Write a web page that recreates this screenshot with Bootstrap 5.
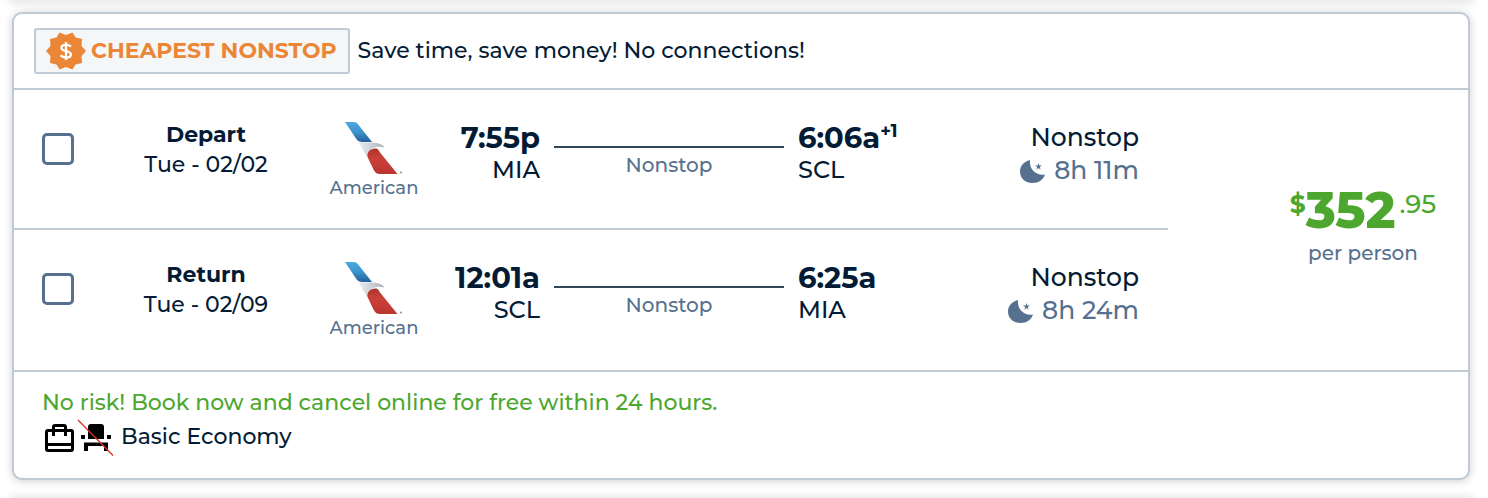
<!DOCTYPE html>
<html lang="en">
<head>
<meta charset="utf-8">
<meta name="viewport" content="width=device-width, initial-scale=1">
<title>Flight results</title>
<link href="https://cdn.jsdelivr.net/npm/bootstrap@5.3.0/dist/css/bootstrap.min.css" rel="stylesheet">
<style>
:root{--ink:#041b35;--slate:#56718f;--rule:#bfcad5;--green:#4da72f;--orange:#ea8636}
body{font-family:Montserrat,Inter,sans-serif;font-weight:500;font-size:22px;line-height:30px;color:var(--ink);background:#fff}
.results{padding:0 18px 0 12px;overflow:hidden}
.edge{height:0;border-radius:10px;box-shadow:0 0 8px 3px rgba(0,0,0,.14)}
.fare{border:2px solid var(--rule);border-radius:10px;box-shadow:0 1px 8px rgba(0,0,0,.2);color:inherit;margin:12px 0 20px}
.fare-head{padding:14px 20px;border-bottom:2px solid var(--rule);gap:8px}
.deal{border:2px solid var(--rule);border-radius:3px;background:#f4f6f8;color:var(--orange);font-weight:700;height:46px;padding:0 11px 0 9px;gap:4px}
.fare-body{display:grid;grid-template-columns:1154fr 300fr;border-bottom:2px solid var(--rule)}
.price{padding:0 0 9px 90px;gap:5px;color:var(--green)}
.leg{display:grid;grid-template-columns:90fr 204fr 132fr 100fr 258fr 160fr 181fr;padding:28px 29px 28px 0;min-height:138px}
.leg + .leg{border-top:2px solid var(--rule);min-height:142px}
.pick{width:32px;height:32px;margin:15px 0 0 28px;border:3px solid var(--slate);border-radius:5px !important}
.when{padding-top:2px}
.sub{color:var(--slate);font-size:20px;line-height:24px}
.airline{color:var(--slate);font-size:18px;line-height:24px}
.time{font-size:29px;line-height:40px;font-weight:700}
.code{font-size:24px;line-height:24px}
.plus{font-size:18px;line-height:18px;top:-11px}
.path-col{padding:0 14px}
.path-line{border-top:2px solid #33475a;margin-top:28px;padding-top:5px}
.stops{font-size:25px;line-height:33px;padding-top:3px}
.dur{color:var(--slate)}
.amount{font-size:50px;line-height:50px;font-weight:800}
.cur{font-size:25px;line-height:36px;font-weight:700}
.cents{font-size:26px;line-height:36px}
.fare-foot{padding:15px 28px 23px}
.safe{color:var(--green);line-height:32px}
.cabin{line-height:36px;gap:7px}
</style>
</head>
<body>
<svg class="position-absolute" width="0" height="0" aria-hidden="true">
  <defs>
    <linearGradient id="blue" x1="0" y1="0" x2="0" y2="1"><stop stop-color="#4aa9e0"/><stop offset=".5" stop-color="#3d93cb"/><stop offset="1" stop-color="#236098"/></linearGradient>
    <linearGradient id="grey" x1="0" y1="0" x2="1" y2="0"><stop stop-color="#eceff1"/><stop offset=".6" stop-color="#c4cbd1"/><stop offset="1" stop-color="#a5adb5"/></linearGradient>
    <linearGradient id="red" x1="0" y1="0" x2="0" y2="1"><stop stop-color="#a9362f"/><stop offset=".4" stop-color="#cc4039"/><stop offset="1" stop-color="#b93631"/></linearGradient>
    <symbol id="tail" viewBox="0 0 64 58"><path fill="url(#blue)" d="M3 4h8c3 0 4.500 1 6 3.500L30 24H20c-3 0-4.500-1-6-3.500Z"/><path fill="url(#grey)" d="M16 23c3 1.500 6 1.500 12 1.500 6-.5 12 1 14.500 5-4-1-8-1-11 .5-4.500 2-6.500 5-6.500 9Z"/><path fill="url(#red)" d="M25.500 39c-1-5 3-9 9-8.500 1.500.5 2 1.500 3.500 4L55.500 56H38c-3 0-4.500-1-6-3.500Z"/><circle cx="59" cy="54.500" r="1" fill="#7b91aa"/></symbol>
    <symbol id="moon" viewBox="0 0 26 26"><path fill="currentColor" d="M10 1C4 2.500 0 7 0 12.500c0 7 5.500 11.500 12.500 11.500 6 0 11-3.500 12.500-8.500-9 1.500-16-5-15-14.500ZM18.500 4l.8 2.500H22l-2.200 1.600.8 2.600-2.100-1.600-2.100 1.600.8-2.600L15 6.500h2.700Z"/></symbol>
  </defs>
</svg>
<main class="results">
  <div class="edge"></div>
  <article class="card fare">
    <header class="fare-head d-flex align-items-center">
      <span class="deal d-flex align-items-center">
        <svg width="42" height="38" viewBox="0 0 42 38" aria-hidden="true"><path fill="#ea8636" d="M21 3 27.500 0.500 30.500 5.500 37 7 36.500 14 41 19 36.500 24 37 31 30.500 32.500 27.500 37.500 21 35 14.500 37.500 11.500 32.500 5 31 5.500 24 1 19 5.500 14 5 7 11.500 5.500 14.500 .5Z"/><path d="M26 14.600C24.700 13.400 23 12.800 21 12.800c-2.800 0-4.600 1.200-4.600 3 0 4.500 9.500 2.100 9.500 6.600 0 1.900-2 3.100-4.800 3.100-2.300 0-4.300-.8-5.600-2.100M21 10v18" fill="none" stroke="#fff" stroke-width="2.300"/></svg>
        <span class="text-nowrap">CHEAPEST NONSTOP</span>
      </span>
      <span>Save time, save money! No connections!</span>
    </header>

    <div class="fare-body">
      <div>
        <section class="leg">
          <div><input class="form-check-input pick" type="checkbox" aria-label="Select departing flight"></div>
          <div class="when text-center"><div class="fw-bold">Depart</div><div>Tue - 02/02</div></div>
          <div class="text-center">
            <svg class="d-block mx-auto" width="64" height="58" role="img" aria-label="American Airlines"><use href="#tail"/></svg>
            <div class="airline">American</div>
          </div>
          <div class="text-end"><div class="time">7:55p</div><div class="code">MIA</div></div>
          <div class="path-col"><div class="path-line sub text-center">Nonstop</div></div>
          <div><div class="time text-nowrap">6:06a<sup class="plus">+1</sup></div><div class="code">SCL</div></div>
          <div class="text-end text-nowrap stops"><div>Nonstop</div>
            <div class="dur"><svg class="me-2 align-middle" width="26" height="26" aria-hidden="true"><use href="#moon"/></svg>8h 11m</div></div>
        </section>
        <section class="leg">
          <div><input class="form-check-input pick" type="checkbox" aria-label="Select return flight"></div>
          <div class="when text-center"><div class="fw-bold">Return</div><div>Tue - 02/09</div></div>
          <div class="text-center">
            <svg class="d-block mx-auto" width="64" height="58" role="img" aria-label="American Airlines"><use href="#tail"/></svg>
            <div class="airline">American</div>
          </div>
          <div class="text-end"><div class="time">12:01a</div><div class="code">SCL</div></div>
          <div class="path-col"><div class="path-line sub text-center">Nonstop</div></div>
          <div><div class="time">6:25a</div><div class="code">MIA</div></div>
          <div class="text-end text-nowrap stops"><div>Nonstop</div>
            <div class="dur"><svg class="me-2 align-middle" width="26" height="26" aria-hidden="true"><use href="#moon"/></svg>8h 24m</div></div>
        </section>
      </div>
      <div class="price d-flex flex-column justify-content-center align-items-center">
        <div class="d-flex"><span class="cur">$</span><span class="amount">352</span><span class="cents ms-1">.95</span></div>
        <div class="sub">per person</div>
      </div>
    </div>

    <footer class="fare-foot">
      <div class="safe">No risk! Book now and cancel online for free within 24 hours.</div>
      <div class="cabin d-flex align-items-center">
        <svg width="72" height="36" viewBox="0 -1 72 36" overflow="visible" aria-hidden="true"><path d="M6 10.500h23q1.500 0 1.500 1.500v17q0 1.500-1.500 1.500H6q-1.500 0-1.500-1.500V12q0-1.500 1.500-1.500ZM4.500 24.500h26M11.500 16V7q0-1.500 1.500-1.500h9q1.500 0 1.500 1.500v9" fill="none" stroke="#000" stroke-width="3"/><path d="M49 4h10a3 3 0 0 1 3 3v12H46V7a3 3 0 0 1 3-3ZM39 15h4v4h-4ZM65 15h4v4h-4ZM42 22.500h24V31h-4v-5H46v5h-4Z"/><path d="M36 0 71 35.500" stroke="#d9322b" stroke-width="1.300"/></svg>
        <span>Basic Economy</span>
      </div>
    </footer>
  </article>
  <div class="edge"></div>
</main>
<script src="https://cdn.jsdelivr.net/npm/bootstrap@5.3.0/dist/js/bootstrap.bundle.min.js"></script>
</body>
</html>
